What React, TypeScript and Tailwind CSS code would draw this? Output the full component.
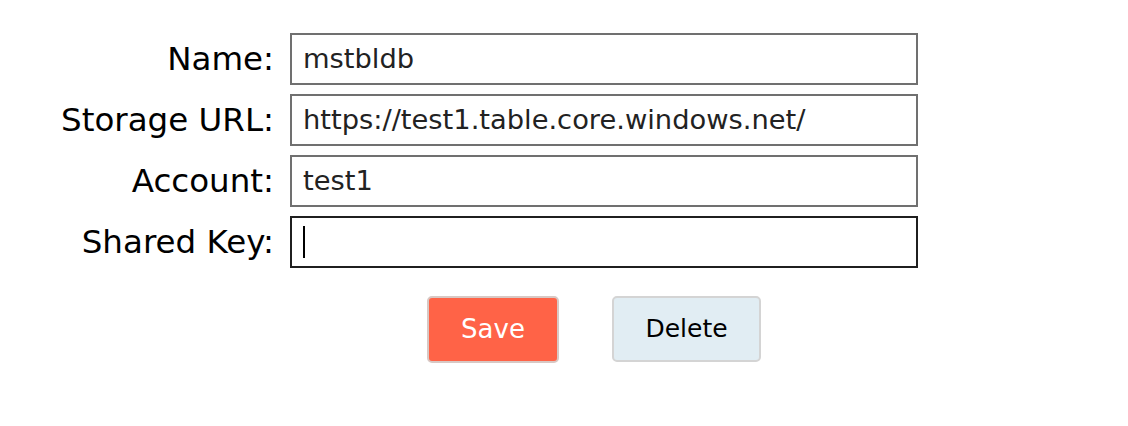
import React from "react";

const rows = [
  { label: "Name:", value: "mstbldb" },
  { label: "Storage URL:", value: "https://test1.table.core.windows.net/" },
  { label: "Account:", value: "test1" },
  { label: "Shared Key:", value: "" },
];

export default function App() {
  return (
    <div className="w-[1128px] h-[426px] bg-white" style={{ fontFamily: '"DejaVu Sans", Verdana, sans-serif' }}>
      <div className="pt-[33px] flex flex-col gap-[9px]">
        {rows.map((r, i) => (
          <div key={r.label} className="flex items-center">
            <div className="w-[274px] text-right text-[32.5px] leading-none text-black">{r.label}</div>
            <div
              className={
                "ml-[16px] w-[628px] h-[52px] border-2 flex items-center px-[11px] text-[27.3px] text-[#222] " +
                (i === 3 ? "border-[#1f1f1f]" : "border-[#707070]")
              }
            >
              {i === 3 ? <span className="w-[2px] h-[32px] bg-black" /> : r.value}
            </div>
          </div>
        ))}
      </div>
      <div className="flex mt-[28px] pl-[427px] gap-[53px]">
        <button className="w-[132px] h-[67px] rounded-[5px] border-2 border-[#d8c8c4] bg-[#ff6347] text-white text-[26px]">
          Save
        </button>
        <button className="w-[149px] h-[66px] rounded-[5px] border-2 border-[#d4d4d4] bg-[#e1edf3] text-black text-[25px]">
          Delete
        </button>
      </div>
    </div>
  );
}
